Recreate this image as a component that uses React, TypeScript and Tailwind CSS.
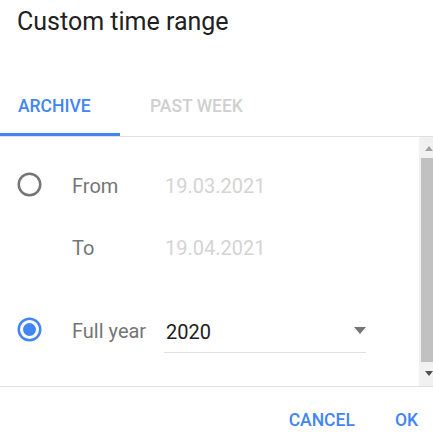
const Radio = ({ checked }: { checked?: boolean }) => (
  <svg width="25" height="25" viewBox="0 0 25 25" className="shrink-0">
    <circle
      cx="12.5"
      cy="12.5"
      r="10.75"
      fill="none"
      stroke={checked ? '#4285f4' : '#757575'}
      strokeWidth="2.5"
    />
    {checked && <circle cx="12.5" cy="12.5" r="6.5" fill="#4285f4" />}
  </svg>
);

const Scrollbar = () => (
  <div className="w-[14px] shrink-0 bg-[#f1f1f1] flex flex-col pt-[9px]">
    <div className="ml-[6px] w-0 h-0 border-x-[4px] border-x-transparent border-b-[5px] border-b-[#a3a3a3]" />
    <div className="ml-[2px] mt-[7px] w-[12px] h-[204px] bg-[#c1c1c1]" />
    <div className="ml-[6px] mt-[9px] w-0 h-0 border-x-[4px] border-x-transparent border-t-[5px] border-t-[#505050]" />
  </div>
);

export default function App() {
  return (
    <div className="w-[433px] h-[444px] bg-white flex flex-col font-['Roboto','Liberation_Sans',sans-serif] overflow-hidden">
      <h2 className="pt-[7px] pl-[17px] text-[25px] leading-[30px] text-[#212121] font-normal">Custom time range</h2>

      <div className="mt-[57px] flex border-b border-[#e0e0e0]">
        <div className="w-[120px] pl-[18px] pb-[15px] border-b-[3px] border-[#4285f4] text-[17.5px] leading-[24px] font-medium text-[#4285f4]">
          ARCHIVE
        </div>
        <div className="pl-[30px] pb-[18px] text-[17.5px] leading-[24px] font-medium text-[#d0d0d0]">PAST WEEK</div>
      </div>

      <div className="flex h-[249px]">
        <div className="flex-1 pt-[35px] text-[20px] leading-[24px]">
          <div className="flex items-start pl-[17px]">
            <Radio />
            <div className="mt-[2px] ml-[30px] w-[93px] text-[#757575]">From</div>
            <div className="mt-[2px] text-[#d4d4d4]">19.03.2021</div>
          </div>

          <div className="flex mt-[38px] pl-[72px]">
            <div className="w-[93px] text-[#757575]">To</div>
            <div className="text-[#d4d4d4]">19.04.2021</div>
          </div>

          <div className="flex items-start pl-[17px] mt-[57px]">
            <Radio checked />
            <div className="mt-[2px] ml-[30px] w-[92px] text-[#757575]">Full year</div>
            <div className="mt-[3px] w-[202px] flex items-center justify-between pl-[2px] pb-[8px] border-b border-[#e0e0e0]">
              <span className="text-[#212121]">2020</span>
              <span className="mb-[3px] w-0 h-0 border-x-[6.5px] border-x-transparent border-t-[7px] border-t-[#757575]" />
            </div>
          </div>
        </div>
        <Scrollbar />
      </div>

      <div className="border-t border-[#e0e0e0] flex-1 flex justify-end items-start pt-[21px] pr-[15px] gap-[40px] text-[17.5px] leading-[24px] font-medium text-[#4285f4]">
        <button>CANCEL</button>
        <button>OK</button>
      </div>
    </div>
  );
}
